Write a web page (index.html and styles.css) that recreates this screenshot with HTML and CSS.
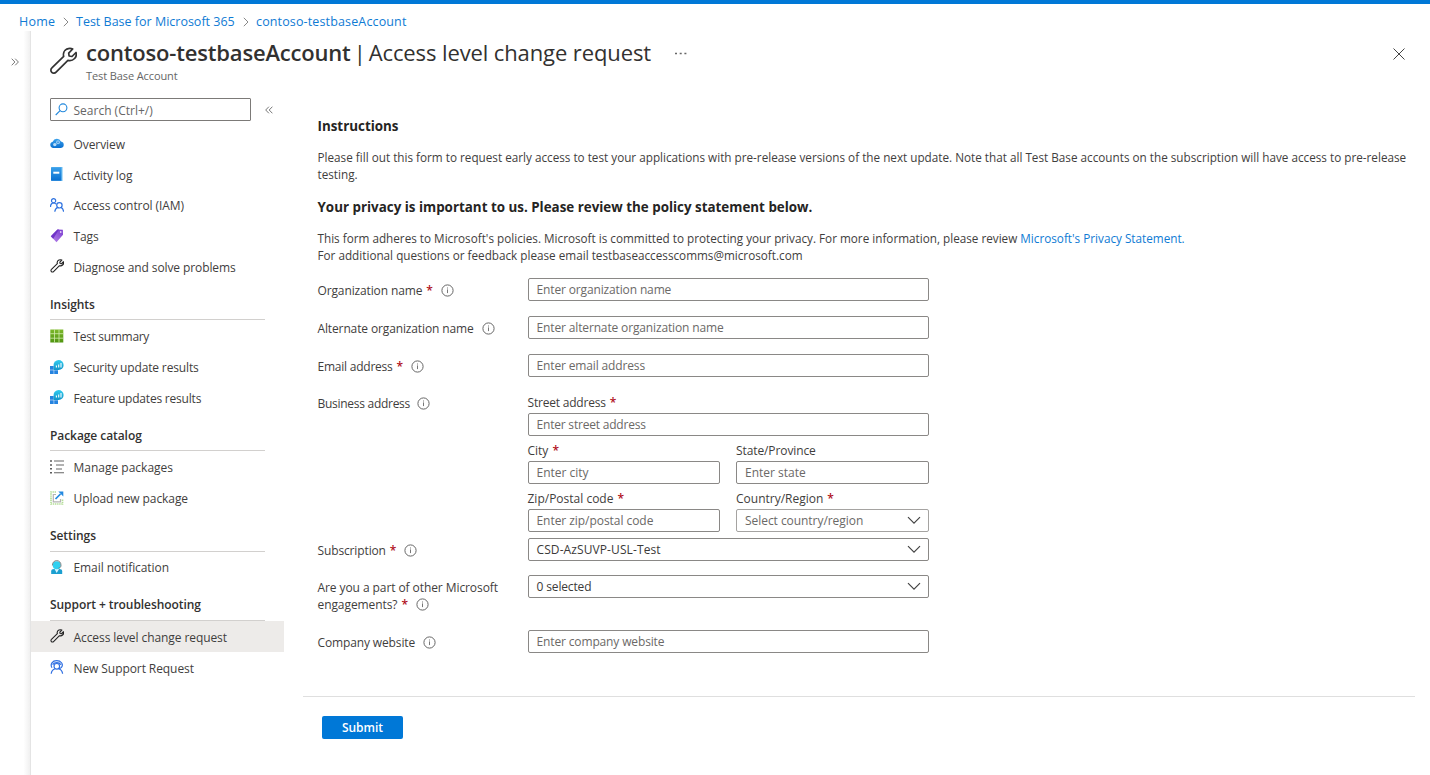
FILE: index.html
```html
<!DOCTYPE html>
<html lang="en">
<head>
<meta charset="utf-8">
<title>contoso-testbaseAccount | Access level change request</title>
<link rel="stylesheet" href="styles.css">
</head>
<body>
<svg width="0" height="0" class="defs" aria-hidden="true">
  <defs>
    <linearGradient id="blue" x1="0" y1="0" x2="0" y2="1"><stop offset="0" stop-color="#3aa0ea"/><stop offset="1" stop-color="#0a6fd0"/></linearGradient>
    <linearGradient id="cyan" x1="0" y1="0" x2="0" y2="1"><stop offset="0" stop-color="#32cdf0"/><stop offset="1" stop-color="#1295c8"/></linearGradient>
    <linearGradient id="purple" x1="1" y1="0" x2="0" y2="1"><stop offset="0" stop-color="#7a3bd0"/><stop offset="1" stop-color="#b987ea"/></linearGradient>
    <linearGradient id="green" x1="0" y1="0" x2="0" y2="1"><stop offset="0" stop-color="#7cb82a"/><stop offset="1" stop-color="#4f9410"/></linearGradient>
    <symbol id="wrench" viewBox="0 0 28 28"><path d="M17.8 2.1c2.3-1 4.4-.8 5.9-.1l-4 4.1.4 2.9 2.9.5 4-4c.6 2 .2 4.3-1.400 6-1.900 2-4.500 2.500-6.700 1.900L7.100 25.100c-1.200 1.300-3.100 1.400-4.300.2-1.300-1.200-1.200-3.200.1-4.400L14.700 9.300c-.8-2.700.5-5.900 3.100-7.200z" fill="none" stroke="currentColor" stroke-linejoin="round"/></symbol>
    <symbol id="info" viewBox="0 0 13 13"><circle cx="6.500" cy="6.500" r="5.600" fill="none" stroke="#666" stroke-width="1"/><path d="M6.500 5.400v3.700M6.500 3.500v1" stroke="#777" stroke-width="1"/></symbol>
    <symbol id="chevron" viewBox="0 0 14 9"><path d="M1 1.200l6 6 6-6" fill="none" stroke="#444" stroke-width="1.200"/></symbol>
    <symbol id="results" viewBox="0 0 14 14"><path d="M0 6h3.700v3.700H0zM0 10.200h3.700V14H0zM4.200 10.200H8V14H4.200z" fill="#2483e0"/><path d="M3.600 9.900V5A5 5 0 1 1 8.700 10z" fill="url(#cyan)"/><path d="M6.400 7.500V5.400M8.700 7.500V4.500M11 7.500V3" stroke="#fff" stroke-width="1.100"/></symbol>
  </defs>
</svg>
<div class="topbar"></div>
<nav class="breadcrumb">
  <a class="crumb crumb-home">Home</a>
  <svg class="sep" viewBox="0 0 6 10"><path d="M.8.8L5 5 .8 9.200"/></svg>
  <a class="crumb crumb-base">Test Base for Microsoft 365</a>
  <svg class="sep" viewBox="0 0 6 10"><path d="M.8.8L5 5 .8 9.200"/></svg>
  <a class="crumb crumb-account">contoso-testbaseAccount</a>
</nav>
<div class="shell">
  <div class="rail"><svg class="double" viewBox="0 0 8 8"><path d="M.7.700L3.900 4 .7 7.300M4.200.700L7.400 4 4.200 7.300"/></svg></div>
  <div class="blade">
    <header class="header">
      <svg class="header-icon"><use href="#wrench"/></svg>
      <div class="heading">
        <h1 class="title"><b class="title-name">contoso-testbaseAccount</b><span class="title-bar">|</span><span class="title-page">Access level change request</span></h1>
        <div class="subtitle">Test Base Account</div>
      </div>
      <svg class="more" viewBox="0 0 12 3"><path d="M0 .7h2v1.500H0zM4.700.7h2v1.500h-2zM9.400.7h2v1.500h-2z" fill="#666"/></svg>
      <svg class="close" viewBox="0 0 12 12"><path d="M.5.5l11 11M11.500.5l-11 11"/></svg>
    </header>
    <div class="columns">
      <aside class="sidebar">
        <div class="search-row">
          <div class="search"><svg class="search-icon" viewBox="0 0 13 13"><circle cx="8" cy="4.800" r="3.900"/><path d="M5.100 7.600L.7 12"/></svg><span class="search-text">Search (Ctrl+/)</span></div>
          <svg class="double" viewBox="0 0 8 8"><path d="M3.900.7L.7 4l3.200 3.300M7.400.7L4.200 4l3.200 3.300"/></svg>
        </div>
        <div class="item"><svg class="icon" viewBox="0 0 14 14"><path d="M3.300 12A3.200 3.200 0 0 1 2.700 5.700 4.500 4.500 0 0 1 11 5.500 3.300 3.300 0 0 1 11 12z" fill="url(#blue)"/><circle cx="4.800" cy="8.600" r="1.700" fill="#b9dcf6"/><circle cx="8" cy="6.200" r="2" fill="#92c9f3"/><circle cx="8" cy="6.200" r=".8" fill="#3189d8"/></svg><span class="t-overview">Overview</span></div>
        <div class="item"><svg class="icon" viewBox="0 0 14 14"><path d="M1.500 0h11v14h-11z" fill="#6bbcf0"/><path d="M1 .3h10.300v13.400H1z" fill="url(#blue)"/><path d="M3.300 4.700h6v2h-6z" fill="#fff"/></svg><span class="t-log">Activity log</span></div>
        <div class="item"><svg class="icon" viewBox="0 0 14 14" fill="none" stroke="#2f73e0" stroke-width="1.200"><circle cx="3.600" cy="2.700" r="2.100"/><path d="M.5 9c0-2.500 1.300-4 3.100-4 1 0 1.800.4 2.400 1.100"/><circle cx="9.400" cy="7.300" r="2.700"/><path d="M4.800 13.800c.2-2.500 1.400-3.700 2.900-4.400M13.600 13.800c-.2-2.500-1.200-3.700-2.500-4.400"/></svg><span class="t-iam">Access control (IAM)</span></div>
        <div class="item"><svg class="icon" viewBox="0 0 14 14"><path d="M.8 7.300L7.500.6l5.300.2.200 5L6.500 13.300z" fill="url(#purple)"/><path d="M.8 7.300L7.500.6l1.500 0L3.200 9.700z" fill="#7136c8"/><circle cx="10.700" cy="3" r=".9" fill="#e3cdf8"/></svg><span class="t-tags">Tags</span></div>
        <div class="item"><svg class="icon wrench-small"><use href="#wrench"/></svg><span class="t-diagnose">Diagnose and solve problems</span></div>
        <h2 class="group">Insights</h2>
        <div class="item"><svg class="icon" viewBox="0 0 14 14"><path d="M.3.5h13v13H.3z" fill="url(#green)"/><path d="M4.500.5v13M9 .5v13M.3 4.700h13M.3 9.200h13" stroke="#d3ecae" stroke-width=".8"/></svg><span class="t-summary">Test summary</span></div>
        <div class="item"><svg class="icon"><use href="#results"/></svg><span class="t-security">Security update results</span></div>
        <div class="item"><svg class="icon"><use href="#results"/></svg><span class="t-feature">Feature updates results</span></div>
        <h2 class="group">Package catalog</h2>
        <div class="item"><svg class="icon" viewBox="0 0 14 14"><path d="M.2.3h1.600v1.500H.2zM.2 4.200h1.600v1.500H.2zM.2 8.100h1.600v1.500H.2zM.2 12h1.600v1.500H.2z" fill="#333"/><path d="M4 1h10M6 5h8M6 9h6M4 12.800h10" stroke="#666" stroke-width="1.100"/></svg><span class="t-manage">Manage packages</span></div>
        <div class="item"><svg class="icon" viewBox="0 0 14 14"><path d="M6 1H1v12h11.500V8" fill="none" stroke="#b4dd98" stroke-width="1.700" stroke-dasharray="1.400 .7"/><path d="M6 3.500H3.300v7.300h7.200V8" fill="none" stroke="#b4b4b4" stroke-width="1.200"/><path d="M5.500 8L10.500 3" stroke="#2389e0" stroke-width="1.700"/><path d="M8.300.4h5v5z" fill="#2389e0"/></svg><span class="t-upload">Upload new package</span></div>
        <h2 class="group">Settings</h2>
        <div class="item"><svg class="icon" viewBox="0 0 14 14"><path d="M1.200 14v-2.700c0-1.500 1-2.300 3-2.300h5c2 0 3 .8 3 2.300V14z" fill="#1b9fd0"/><path d="M4.500 9l2.200 4L9 9z" fill="#d7f5ff"/><circle cx="6.700" cy="5.200" r="4" fill="#31d0f0"/><path d="M2.400 5.400C2.200-1 11.200-1 11 5.400c0 1.500-1 2.600-2.500 2.800" fill="none" stroke="#777" stroke-width=".9"/></svg><span class="t-email">Email notification</span></div>
        <h2 class="group">Support + troubleshooting</h2>
        <div class="item item-active"><svg class="icon wrench-small"><use href="#wrench"/></svg><span class="t-access">Access level change request</span></div>
        <div class="item"><svg class="icon" viewBox="0 0 14 14" fill="none" stroke="#2f6fe2" stroke-width="1.200"><circle cx="6.800" cy="6.300" r="2.800"/><path d="M1.200 13.800c.3-2.700 2-4.400 3.900-5M12.600 13.800c-.3-2.700-2-4.400-3.900-5M2 7.800C-.2 4 2.500.7 6.700.7s7 3.300 4.900 6.500c-.6 1-1.800 1.400-3.500 1.400M2.600 4.700C4.500 1.800 9.200 1.800 11 4.700"/></svg><span class="t-support">New Support Request</span></div>
      </aside>
      <main class="content">
        <div class="form">
          <h3 class="section section-first">Instructions</h3>
          <p class="para">Please fill out this form to request early access to test your applications with pre-release versions of the next update. Note that all Test Base accounts on the subscription will have access to pre-release<br>testing.</p>
          <h3 class="section section-privacy">Your privacy is important to us. Please review the policy statement below.</h3>
          <p class="para">This form adheres to Microsoft's policies. Microsoft is committed to protecting your privacy. For more information, please review <a class="link">Microsoft's Privacy Statement.</a><br>For additional questions or feedback please email testbaseaccesscomms@microsoft.com</p>

          <div class="row row-org"><label class="label"><span>Organization name</span><i class="req">*</i><svg class="info"><use href="#info"/></svg></label><input class="field" placeholder="Enter organization name"></div>
          <div class="row"><label class="label"><span>Alternate organization name</span><svg class="info"><use href="#info"/></svg></label><input class="field" placeholder="Enter alternate organization name"></div>
          <div class="row"><label class="label"><span class="l-email">Email address</span><i class="req">*</i><svg class="info"><use href="#info"/></svg></label><input class="field" placeholder="Enter email address"></div>
          <div class="row row-address">
            <label class="label label-business"><span class="l-business">Business address</span><svg class="info info-near"><use href="#info"/></svg></label>
            <div class="address">
              <div class="cell wide"><div class="caption caption-tight">Street address<i class="req">*</i></div><input class="field field-street" placeholder="Enter street address"></div>
              <div class="cell"><div class="caption">City<i class="req">*</i></div><input class="field field-loose" placeholder="Enter city"></div>
              <div class="cell"><div class="caption caption-state">State/Province</div><input class="field field-loose" placeholder="Enter state"></div>
              <div class="cell"><div class="caption">Zip/Postal code<i class="req">*</i></div><input class="field field-zip" placeholder="Enter zip/postal code"></div>
              <div class="cell"><div class="caption">Country/Region<i class="req">*</i></div><div class="field field-zip select select-empty"><span>Select country/region</span><svg class="chevron"><use href="#chevron"/></svg></div></div>
            </div>
          </div>
          <div class="row row-sub"><label class="label"><span>Subscription</span><i class="req">*</i><svg class="info"><use href="#info"/></svg></label><div class="field select"><span class="v-sub">CSD-AzSUVP-USL-Test</span><svg class="chevron"><use href="#chevron"/></svg></div></div>
          <div class="row row-tall"><div class="label-two"><span>Are you a part of other Microsoft</span><div class="label-line"><span>engagements?</span><i class="req">*</i><svg class="info info-wide"><use href="#info"/></svg></div></div><div class="field select"><span>0 selected</span><svg class="chevron"><use href="#chevron"/></svg></div></div>
          <div class="row"><label class="label"><span>Company website</span><svg class="info"><use href="#info"/></svg></label><input class="field" placeholder="Enter company website"></div>
        </div>
        <footer class="footer"><button class="submit">Submit</button></footer>
      </main>
    </div>
  </div>
</div>
</body>
</html>
```
FILE: styles.css
```css
* { box-sizing: border-box; }
body {
  margin: 0;
  width: 1430px;
  height: 775px;
  overflow: hidden;
  background: #fff;
  color: #3f3e3d;
  font: 12px/17px "Open Sans", "Noto Sans", sans-serif;
}
.defs { display: block; height: 0; }
h1, h2, h3, p { margin: 0; }
svg { flex: none; display: block; }

.topbar { height: 4px; background: #0078d7; }
.breadcrumb { display: flex; align-items: center; height: 27px; padding: 7px 0 0 19px; font-size: 12.5px; }
.crumb { color: #0f7bd4; white-space: nowrap; }
.crumb-home { width: 36px; letter-spacing: .25px; }
.crumb-base { width: 159px; }
.crumb-account { letter-spacing: .14px; }
.sep { width: 6px; height: 10px; margin: 1px 7px 0 8px; fill: none; stroke: #888; stroke-width: 1; }

.shell { display: flex; height: 744px; }
.rail { width: 31px; flex: none; padding: 27px 0 0 11px; border-right: 1px solid #e4e4e4; background: linear-gradient(to right, #fff 78%, #f0f0f0); }
.double { width: 8px; height: 8px; fill: none; stroke: #555; stroke-width: .8; }
.blade { flex: 1; min-width: 0; }

.header { display: flex; height: 67px; padding-left: 19px; }
.header-icon { width: 28px; height: 28px; margin: 16px 9px 0 -1px; color: #333; stroke-width: 1.7; }
.heading { width: 565px; padding-top: 6px; }
.title { display: flex; font-size: 22px; line-height: 30px; font-weight: 400; color: #323130; white-space: nowrap; }
.title-name { font-weight: 600; width: 265px; letter-spacing: -.18px; }
.title-bar { width: 18px; text-align: center; }
.title-page { letter-spacing: -.11px; }
.subtitle { margin-top: 1px; font-size: 11px; line-height: 16px; letter-spacing: -.13px; color: #666; }
.subtitle { letter-spacing: -.1px; }
.more { width: 12px; height: 3px; margin: 21px 0 0 24px; }
.close { width: 12px; height: 12px; margin: 17px 25px 0 auto; fill: none; stroke: #444; stroke-width: 1; }

.columns { display: flex; }
.sidebar { width: 253px; flex: none; }
.search-row { display: flex; align-items: center; gap: 14px; height: 23px; margin: 0 0 7px 19px; }
.search { display: flex; align-items: center; width: 201px; height: 23px; padding-left: 4px; border: 1px solid #7c7a78; border-radius: 1px; color: #666; }
.search-icon { width: 13px; height: 13px; margin-right: 5.5px; fill: none; stroke: #2288dc; stroke-width: 1.100; }
.search-text { padding-top: 1px; }
.item { display: flex; align-items: center; gap: 9.500px; height: 30.750px; padding-left: 19px; white-space: nowrap; letter-spacing: -.08px; }
.item span { padding-top: 2px; }
.item-active { background: #edebe9; }
.icon { width: 14px; height: 14px; }
.wrench-small { color: #222; stroke-width: 2.200; }
.t-diagnose { letter-spacing: -.1px; }
.t-summary { letter-spacing: -.32px; }
.t-security { letter-spacing: -.14px; }
.t-feature { letter-spacing: -.2px; }
.t-manage { letter-spacing: 0; }
.group { height: 38.700px; margin: 0 19px; padding-top: 14px; border-bottom: 1px solid #d2d0ce; font-size: 12px; line-height: 17px; font-weight: 600; letter-spacing: -.07px; color: #323130; white-space: nowrap; }

.content { flex: 1; padding: 19px 15px 0 19px; }
.form { height: 579px; padding-left: 14.500px; }
.section { font-size: 13.380px; line-height: 18px; font-weight: 700; color: #252423; white-space: nowrap; }
.section-privacy { margin: 15px 0 14px; }
.section-first { margin-bottom: 14px; }
.para { font-size: 11.730px; white-space: nowrap; line-height: 17px; }
.link { color: #0f7bd4; }

.row { display: grid; grid-template-columns: 210px 401px; align-items: start; margin-bottom: 13px; }
.row-org { margin-top: 13.500px; }
.row-address { margin: 14px 0 6px; }
.row-sub { margin-bottom: 12px; }
.row-tall { margin-bottom: 17px; }
.label, .label-line { display: flex; align-items: center; white-space: nowrap; }
.label { height: 25px; letter-spacing: -.13px; }
.l-email { letter-spacing: -.23px; }
.l-business { letter-spacing: -.28px; }
.label-two { padding-top: 4px; white-space: nowrap; letter-spacing: -.08px; }
.label-business { margin-top: -2px; }
.req { margin-left: 4px; color: #b0101c; font-style: normal; font-weight: 600; }
.info { width: 13px; height: 13px; margin-left: 8px; }
.info-near { margin-left: 7px; }
.field { width: 100%; height: 23px; padding: 0 8px; border: 1px solid #8a8886; border-radius: 2px; background: #fff; font: 12px/17px "Open Sans", "Noto Sans", sans-serif; letter-spacing: -.14px; color: #3b3a39; }
.field::placeholder { color: #6b6967; opacity: 1; }
.field-street { letter-spacing: -.2px; }
.field-loose { letter-spacing: 0; }
.field-zip { letter-spacing: -.05px; }
.v-sub { letter-spacing: .1px; }
.select { display: flex; align-items: center; justify-content: space-between; white-space: nowrap; }
.select-empty { border-color: #a5a3a1; color: #6b6967; }
.chevron { width: 14px; height: 9px; margin-right: -1px; }
.address { display: grid; grid-template-columns: 1fr 1fr; column-gap: 16px; row-gap: 5px; }
.wide { grid-column: 1 / 3; }
.caption { height: 20px; padding-top: 1px; white-space: nowrap; }
.caption-tight { letter-spacing: -.2px; }
.caption-state { letter-spacing: -.1px; }

.footer { padding: 19px 0 0 19px; border-top: 1px solid #dfdfdf; }
.submit { display: block; width: 81px; height: 23px; padding: 0; border: 0; border-radius: 2px; background: #0078d7; color: #fff; font: 600 12px/17px "Open Sans", "Noto Sans", sans-serif; }
```
